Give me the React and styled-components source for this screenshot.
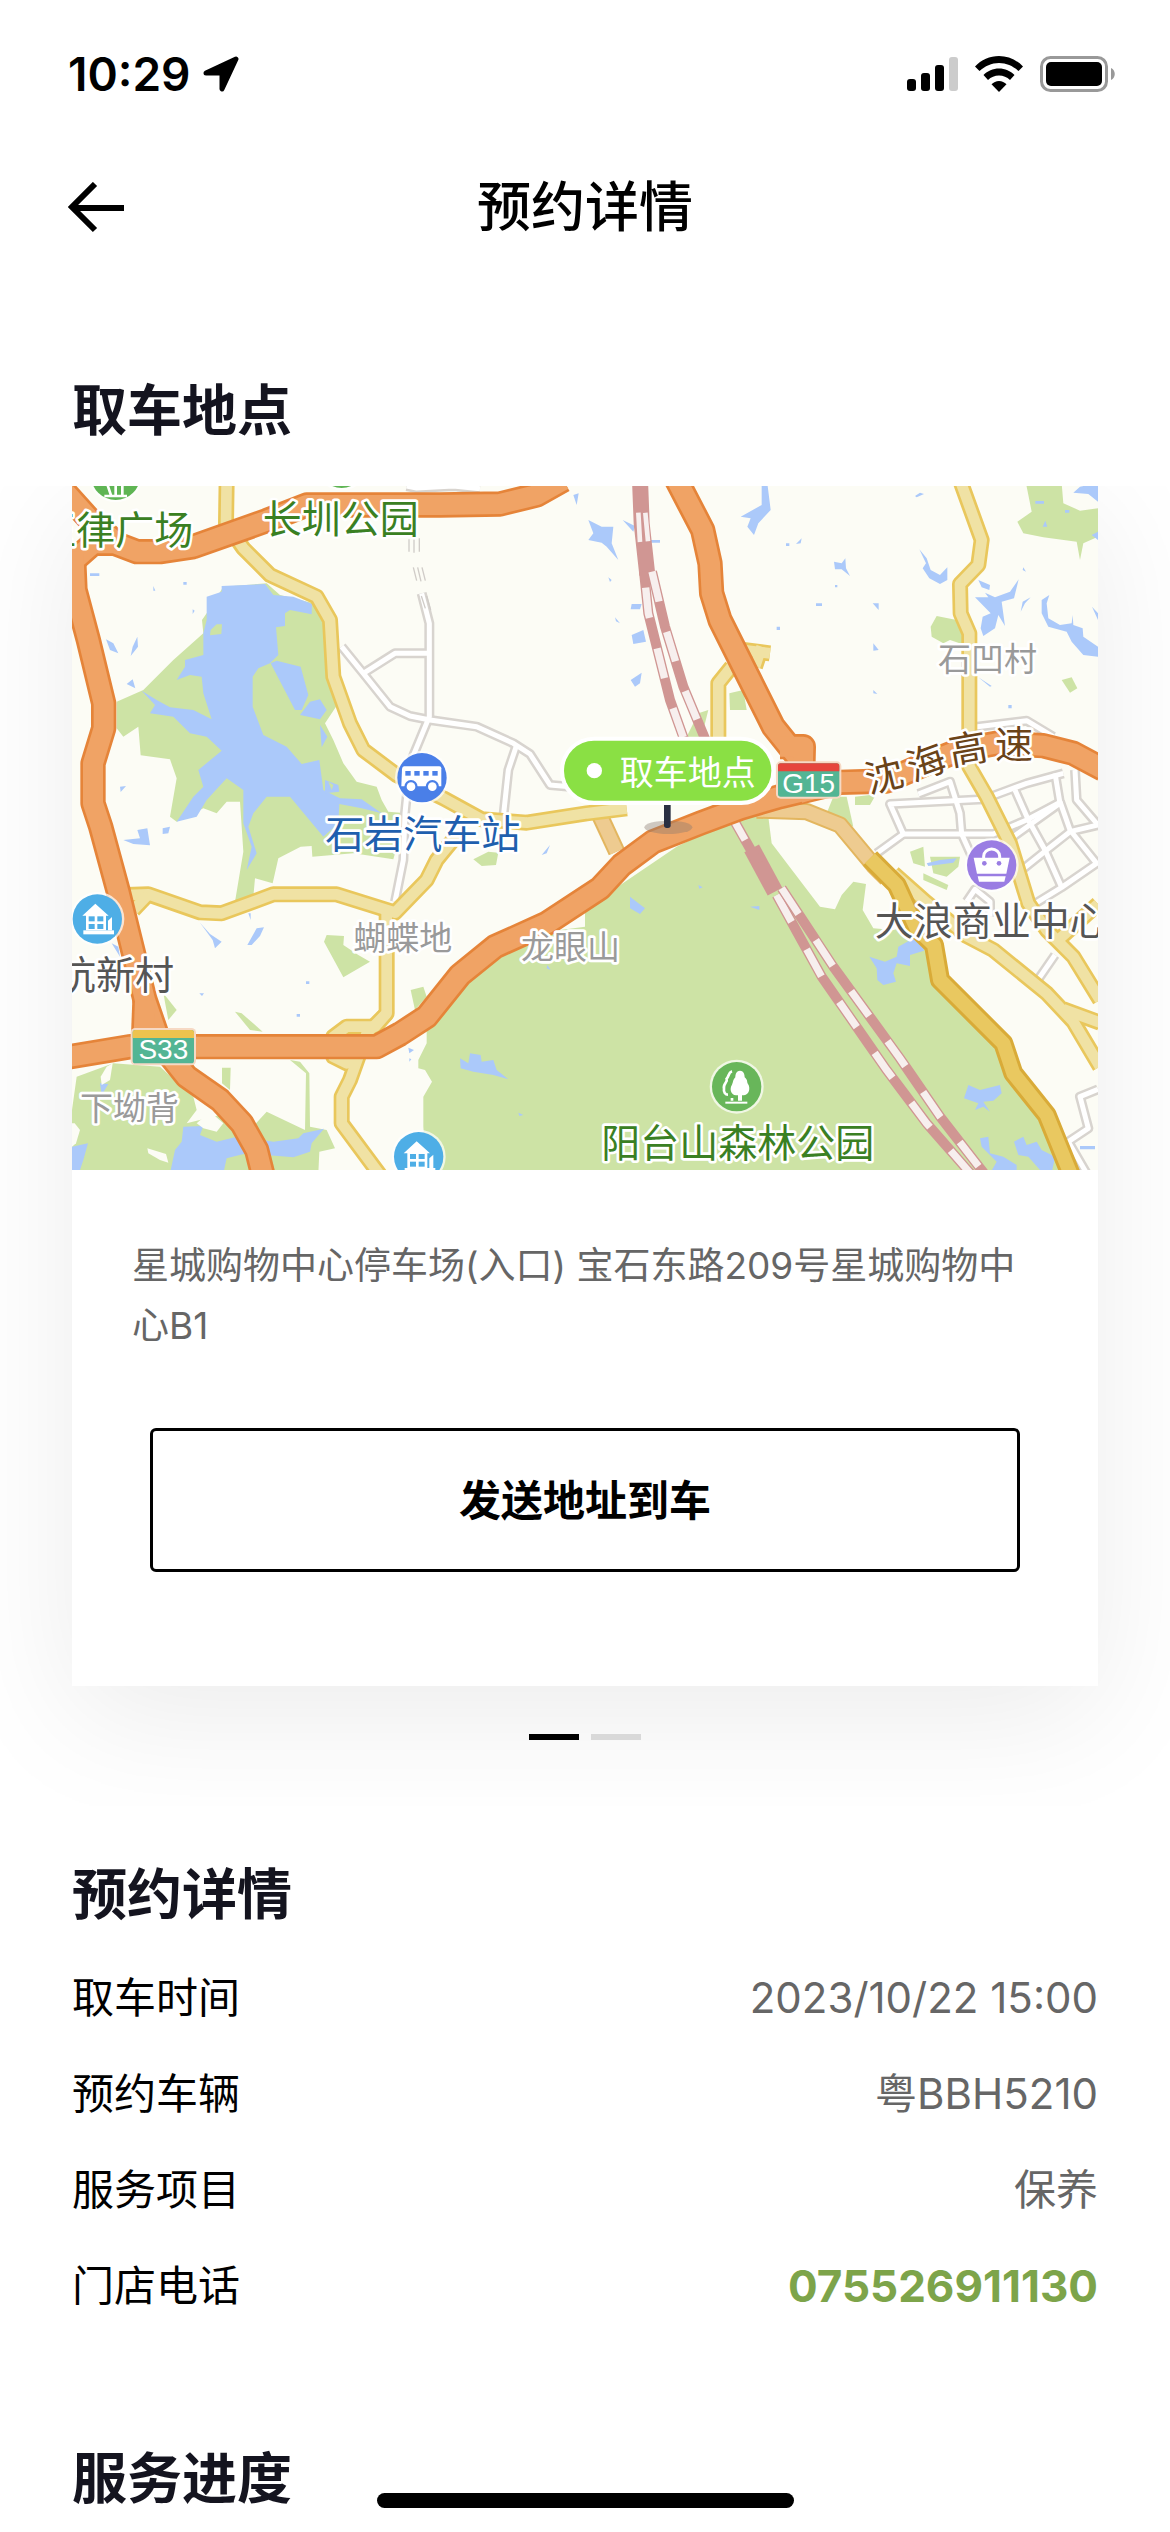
import React from 'react'
import styled, { createGlobalStyle } from 'styled-components'

const GlobalStyle = createGlobalStyle`
  * {
    box-sizing: border-box;
  }
  body {
    margin: 0;
    background: #fff;
    color: #000;
    font-family: Inter, "Noto Sans CJK SC", sans-serif;
  }
  h1, h2, p, dl, dd {
    margin: 0;
  }
`

const Page = styled.div`
  min-height: 100vh;
  overflow: hidden;
`

const StatusBar = styled.div`
  display: flex;
  align-items: center;
  justify-content: space-between;
  height: 148px;
  padding: 0 54px 0 68px;
`

const StatusGroup = styled.div`
  display: flex;
  align-items: center;
  gap: ${props => props.$gap}px;
`

const Clock = styled.span`
  font-size: 46px;
  line-height: 56px;
  font-weight: 600;
`

const NavBar = styled.header`
  display: grid;
  grid-template-columns: 1fr auto 1fr;
  align-items: center;
  height: 120px;
  padding: 0 66px;
`

const BackButton = styled.button`
  display: flex;
  justify-self: start;
  padding: 0;
  border: 0;
  background: none;
  cursor: pointer;
`

const NavTitle = styled.h1`
  font-size: 54px;
  line-height: 80px;
  font-weight: 500;
`

const SectionTitle = styled.h2`
  padding: 0 72px;
  color: #14141f;
  font-size: 55px;
  line-height: 80px;
  font-weight: 700;
`

const PickupSection = styled.section`
  padding-top: 102px;
`

const Carousel = styled.div`
  margin-top: 36px;
  padding: 0 72px 66px;
  overflow: hidden;
`

const Card = styled.article`
  background: #fff;
  box-shadow: 0 30px 120px rgba(0, 0, 0, 0.08);
`

const MapSvg = styled.svg`
  display: block;
  width: 100%;
  height: auto;
`

const MapText = styled.text`
  font-family: "Noto Sans CJK SC", sans-serif;
  font-size: ${props => props.$size || 117}px;
  fill: ${props => props.$color};
  stroke: #fff;
  stroke-width: ${props => (props.$plain ? 0 : 16)}px;
  stroke-linejoin: round;
  paint-order: stroke;
`

const BadgeText = styled(MapText)`
  font-family: "Liberation Sans", Arial, sans-serif;
  text-anchor: middle;
`

const CardBody = styled.div`
  padding: 66px 60px 114px;
`

const Address = styled.p`
  color: #666;
  font-size: 37px;
  line-height: 60px;
`

const SendButton = styled.button`
  display: block;
  width: calc(100% - 36px);
  height: 144px;
  margin: 72px auto 0;
  padding: 0 0 6px;
  border: 3px solid #000;
  border-radius: 6px;
  background: #fff;
  color: #000;
  font-family: inherit;
  font-size: 42px;
  font-weight: 700;
  cursor: pointer;
`

const Pagination = styled.div`
  display: flex;
  justify-content: center;
  gap: 12px;
  margin-top: 48px;
`

const Bullet = styled.span`
  width: 50px;
  height: 6px;
  background: ${props => (props.$active ? '#000' : '#d9d9d9')};
`

const DetailSection = styled.section`
  padding-top: 48px;
`

const DetailList = styled.dl`
  padding: 16px 72px 0;
`

const DetailRow = styled.div`
  display: flex;
  align-items: center;
  justify-content: space-between;
  height: 96px;
  font-size: 42px;
  line-height: 60px;
`

const DetailValue = styled.dd`
  color: #666;
`

const PhoneLink = styled.a`
  color: #7da44a;
  font-size: 44px;
  font-weight: 700;
  text-decoration: none;
`

const ProgressSection = styled.section`
  padding-top: 104px;
`

const HomeIndicator = styled.div`
  position: fixed;
  bottom: 24px;
  left: 50%;
  width: 417px;
  height: 15px;
  margin-left: -208px;
  border-radius: 8px;
  background: #000;
`

const LocationIcon = () => (
  <svg width="36" height="36" viewBox="0 0 36 36" aria-hidden="true">
    <path
      d="M33 3 L19 33 V17 H3 Z"
      stroke="#000"
      strokeWidth="5"
      strokeLinejoin="round"
    />
  </svg>
)

const SignalIcon = () => (
  <svg width="51" height="36" viewBox="0 0 51 36" aria-hidden="true">
    <rect x="0" y="23" width="9" height="12" rx="3" />
    <rect x="14" y="17" width="9" height="18" rx="3" />
    <rect x="28" y="9" width="9" height="26" rx="3" />
    <rect x="42" y="1" width="9" height="34" rx="3" fill="#ccc" />
  </svg>
)

const WifiIcon = () => (
  <svg width="48" height="36" viewBox="0 0 48 36" aria-hidden="true">
    <path d="M24 0 C33 0 42 4 48 10.5 L43.5 15 C38 10 31.500 7 24 7 C16.500 7 10 10 4.500 15 L0 10.500 C6 4 15 0 24 0 Z" />
    <path d="M24 12.500 C30 12.500 35.500 15 39.500 19 L35 24 C32 21.200 28.200 19.500 24 19.500 C19.800 19.500 16 21.200 13 24 L8.500 19 C12.500 15 18 12.500 24 12.500 Z" />
    <path d="M24 25 C27 25 29.500 26.300 31.500 28.300 L24 36 L16.500 28.300 C18.500 26.300 21 25 24 25 Z" />
  </svg>
)

const BatteryIcon = () => (
  <svg width="76" height="36" viewBox="0 0 76 36" aria-hidden="true">
    <rect x="1.500" y="1.500" width="65" height="33" rx="9" fill="none" stroke="#999" strokeWidth="3" />
    <rect x="6" y="6" width="56" height="24" rx="5" />
    <path d="M71 12 C76 14 76 22 71 24 Z" fill="#999" />
  </svg>
)

const BackIcon = () => (
  <svg width="60" height="52" viewBox="0 0 60 52" aria-hidden="true">
    <path
      d="M58 26 H7 M29 2 L6 25 L29 48"
      fill="none"
      stroke="#000"
      strokeWidth="6"
    />
  </svg>
)

const streets = [
  '845,500 910,580 990,680 1050,708 1110,720 1250,740 1360,790 1410,822 1470,915 1530,920',
  '910,580 1005,520 1110,520',
  '1085,340 1108,430 1108,710 1050,850 1035,1000 1030,1140 1005,1265',
  '1370,795 1345,870 1330,1010',
  '1040,18 1070,24 1180,18 1260,26',
  '2740,742 2900,722 2980,770',
  '2575,942 2670,905 2700,1000 2705,1062 2740,1140',
  '2450,1120 2530,1062 2490,972 2770,958 2900,910 3010,880',
  '2530,1062 2800,1062 2900,1020 3002,966',
  '2865,930 2905,1020 2955,1110 3005,1222',
  '2860,1070 3000,970 2985,880',
  '3045,870 3050,960 3114,1035',
  '3000,965 3030,1050 3110,1150 3005,1222 2930,1268',
  '2885,1170 2960,1110 3030,1055 3114,1035',
  '2720,1265 2745,1228 2790,1265 2790,1310',
  '2985,1425 2930,1505',
  '3114,1828 3060,1850 3085,1945 3025,1985 3080,2080'
]

const yellowRoads = [
  '500,0 498,130 550,205 630,285 770,350 810,420 820,590 870,730 910,810 1010,885 1150,955 1265,1018 1400,1028 1580,1000 1700,985',
  '200,1245 265,1243 420,1297 485,1300 640,1243 830,1243 1005,1298 1100,1200 1130,1140 1195,1060',
  '265,1243 220,1290',
  '980,1300 980,1600 920,1660 870,1800 845,1850 845,1930 960,2085',
  '980,1600 945,1640 860,1640 820,1670 820,1730 860,1750 910,1700',
  '2015,560 1975,610 1975,800',
  '2050,510 2130,520',
  '2105,500 2085,560',
  '2700,0 2765,180 2755,255 2700,312 2702,400 2728,460 2728,860 2780,950 2850,1090 2905,1270 2960,1350 3040,1430 3120,1560',
  '3114,1272 3000,1375',
  '2500,1180 2600,1268 2720,1368 2800,1410 2960,1540 3040,1625 3120,1760',
  '3010,1588 3120,1628'
]

const highways = [
  '0,20 90,120 165,185',
  '20,260 100,190 165,190 230,215 300,215 400,200 620,122 740,75 1040,75 1140,75 1320,72 1430,45 1510,0',
  '40,215 45,330 85,480 131,670 131,745 99,850 99,970 122,1040 175,1235 255,1560 300,1690 380,1790 480,1860 545,1930 590,2010 610,2090',
  '255,1560 250,1690',
  '20,1732 210,1700 950,1700 1020,1662 1100,1610 1200,1485 1305,1400 1460,1330 1620,1225 1685,1155 1780,1085 1920,1030 2040,985 2160,950 2340,907 2480,903 2600,850 2700,810 2810,790 2950,797 3040,820 3130,868',
  '1850,0 1928,150 1950,250 1955,340 1980,420 2070,600 2140,740 2220,840 2255,960',
  '2160,800 2230,800 2228,880'
]

const trunkRoads = [
  '2430,1135 2510,1215 2570,1345 2622,1395 2640,1500 2830,1690 2860,1780 2960,1905 3035,2090'
]

const tanRoads = [
  '2090,990 2240,995 2340,1035 2440,1155 2480,1195',
  '1612,990 1670,1115'
]

const railTracks = [
  { points: '1752,275 1765,400 1830,660 1880,800', offset: -48 },
  { points: '1776,275 1815,440 1870,620 1945,800', offset: 0 },
  { points: '2010,1000 2095,1150', offset: 0 },
  { points: '2150,1245 2285,1490 2480,1770 2600,1930 2740,2090', offset: 0 },
  { points: '2165,1225 2320,1460 2520,1735 2640,1910 2780,2090', offset: 0 }
]

const parks = [
  'M170 665 L250 630 L340 540 L430 460 L426 420 L440 400 L490 320 L620 310 L660 345 L760 370 L800 450 L810 600 L828 680 L795 730 L820 780 L850 850 L890 905 L950 920 L965 960 L985 995 L1040 1000 L1000 1138 L880 1120 L757 1130 L755 1098 L722 1100 L655 1135 L638 1210 L585 1195 L580 1250 L525 1265 L550 1115 L540 965 L500 965 L470 1000 L430 985 L350 1025 L330 1010 L350 895 L330 838 L242 826 L235 740 L190 770 L170 745 Z',
  'M1100 2080 L1090 1940 L1090 1850 L1116 1805 L1095 1770 L1075 1765 L1075 1740 L1100 1690 L1100 1640 L1240 1480 L1330 1410 L1500 1350 L1575 1340 L1575 1300 L1600 1270 L1850 1100 L2010 1020 L2060 930 L2125 1010 L2135 1090 L2200 1175 L2280 1280 L2325 1288 L2345 1245 L2380 1205 L2418 1212 L2408 1290 L2440 1345 L2500 1350 L2580 1330 L2625 1500 L2830 1700 L2950 1900 L3035 2080 Z',
  'M36 1890 L50 1790 L160 1750 L300 1760 L400 1850 L410 1890 L380 1930 L480 1905 L560 1960 L620 1895 L735 1950 L738 1780 L690 1740 L720 1745 L748 1780 L750 1940 L800 1950 L825 2005 L778 2015 L775 2080 L36 2080 Z',
  'M486 1763 L512 1763 L510 1830 L486 1810 Z',
  'M310 1540 L350 1590 L325 1620 Z',
  'M800 1365 L852 1368 L850 1395 L895 1425 L930 1445 L850 1492 L792 1385 Z',
  'M525 1595 L545 1600 L608 1655 L570 1650 Z',
  'M1240 1138 L1285 1115 L1315 1118 L1308 1155 L1265 1158 Z',
  'M1052 1530 L1090 1520 L1100 1550 L1065 1590 Z',
  'M2898 10 L3005 10 L3010 70 L3060 92 L3114 85 L3114 170 L3070 190 L3060 240 L3050 185 L2950 172 L2890 160 L2872 125 L2915 95 Z',
  'M2612 440 L2630 408 L2690 420 L2730 500 L2670 480 L2650 490 L2615 470 Z',
  'M3005 600 L3035 592 L3052 625 L3030 638 Z',
  'M2008 640 L2050 630 L2060 690 L2010 690 Z',
  'M1880 770 L1915 700 L1945 690 L1920 790 Z',
  'M2320 950 L2360 950 L2380 1040 L2300 1000 Z',
  'M2385 950 L2430 945 L2450 940 L2430 975 L2385 975 Z',
  'M2550 1115 L2590 1100 L2595 1160 L2560 1150 Z M2610 1130 L2700 1130 L2695 1160 L2660 1190 L2620 1180 Z M2590 1180 L2665 1215 L2660 1230 L2590 1200 Z'
]

const lakes = [
  'M440 350 L485 335 L485 318 L615 312 L640 345 L700 350 L756 372 L755 403 L690 390 L675 400 L675 438 L648 442 L655 525 L630 550 L595 565 L578 590 L578 680 L610 765 L680 800 L725 852 L778 840 L790 930 L840 955 L905 958 L965 1000 L905 985 L838 972 L835 1030 L790 1070 L740 1010 L690 950 L620 950 L580 1000 L565 1040 L590 1120 L560 1170 L575 1100 L550 1030 L550 930 L500 895 L440 960 L410 1010 L350 1025 L400 950 L430 920 L415 870 L485 812 L440 770 L390 760 L340 710 L270 700 L285 675 L245 632 L290 660 L330 682 L400 690 L455 718 L430 640 L425 590 L390 585 L350 600 L375 560 L375 540 L430 525 L430 460 L440 420 Z',
  'M632 550 L650 542 L722 560 L745 645 L725 690 L705 690 Z',
  'M720 705 L750 665 L780 658 L800 690 L780 718 Z',
  'M780 735 L802 770 L785 802 Z',
  'M795 900 L835 915 L838 935 L795 940 Z',
  'M90 280 H118 V288 H90 Z M370 306 H380 V314 H370 Z M280 318 L286 332 H280 Z M398 388 L404 392 L398 402 Z',
  'M138 478 L160 490 L175 520 L150 510 Z M232 470 L234 500 L212 528 L218 500 Z M200 612 L218 598 L226 625 Z',
  'M180 920 L198 918 L182 936 Z M190 1080 L240 1075 L232 1050 L262 1045 L270 1096 L220 1092 Z M308 1045 L330 1040 L325 1060 L308 1062 Z',
  'M420 1328 L450 1362 L485 1385 L465 1405 L458 1380 Z M562 1395 L590 1345 L612 1342 L600 1368 L575 1395 Z M565 1300 H572 V1320 Z M155 1390 L175 1400 L180 1430 Z',
  'M418 1540 L432 1540 L426 1548 Z M738 1504 H748 V1512 H738 Z M710 1602 H720 V1610 H710 Z',
  'M120 1810 L145 1812 L125 1845 Z M36 2000 L84 1990 L70 2040 L60 2070 L36 2070 Z',
  'M370 1940 L430 1938 L420 1965 L470 1985 L540 1968 L640 1985 L715 1975 L730 1960 L792 1946 L755 1990 L750 2015 L700 2032 L560 2020 L500 2035 L490 2080 L330 2080 L345 2010 L365 1985 Z',
  'M1585 120 L1625 140 L1660 140 L1655 190 L1675 240 L1640 200 L1625 188 L1585 180 L1600 160 Z',
  'M1540 45 L1556 40 L1550 75 Z M1688 120 L1725 138 L1720 155 Z M1768 180 H1800 V188 H1768 Z M1645 292 L1655 300 L1650 306 Z',
  'M1715 372 L1745 372 L1740 388 L1712 388 Z M1715 465 L1750 450 L1758 485 L1720 492 Z M1665 412 L1680 430 L1668 424 Z M1712 600 L1745 578 L1740 610 L1725 620 Z',
  'M2105 10 L2122 10 L2132 90 L2095 130 L2082 165 L2062 140 L2072 115 L2042 110 L2105 75 Z',
  'M2565 48 L2580 38 L2592 42 L2570 52 Z M2208 192 L2225 175 L2222 190 Z M2178 190 H2188 V198 H2178 Z',
  'M2322 245 L2345 250 L2356 235 L2358 265 L2370 288 L2345 268 L2325 268 Z M2325 315 H2332 V322 H2325 Z M2268 370 H2286 V378 H2268 Z M2438 370 L2456 370 L2456 390 Z M2150 440 H2160 V450 H2150 Z M2440 490 L2456 510 L2440 512 Z M2440 630 L2452 642 L2440 640 Z',
  'M2578 208 L2600 235 L2612 270 L2640 285 L2662 262 L2662 300 L2640 312 L2608 295 L2588 265 L2598 250 Z',
  'M2755 300 L2790 315 L2788 330 L2765 322 Z M2745 352 L2785 352 L2775 338 L2805 352 L2850 335 L2876 298 L2862 355 L2825 365 L2835 438 L2815 405 L2805 445 L2770 468 L2762 445 L2768 410 L2792 400 Z',
  'M2890 262 L2898 275 L2888 270 Z M2882 395 L2888 365 L2912 352 L2895 370 Z',
  'M2945 360 L2968 345 L2960 370 L2965 415 L3000 435 L3035 430 L3038 405 L3040 435 L3068 445 L3070 470 L3114 500 L3114 530 L3070 525 L3035 485 L3020 455 L2965 440 L2945 400 Z',
  'M3040 38 L3060 20 L3114 10 L3114 65 L3085 42 Z M3095 165 L3114 155 L3114 180 Z M3096 380 L3114 400 L3114 420 Z M2926 63 H2952 V71 H2926 Z M2948 140 L2956 122 L2962 140 Z M3015 90 H3028 V98 H3015 Z',
  'M2755 592 L2795 618 L2790 620 Z M2828 655 L2832 668 Z M2845 675 H2855 V685 H2845 Z',
  'M1710 1250 L1755 1285 L1740 1302 L1710 1285 Z M1915 1215 L1928 1222 L1918 1226 Z M2070 1280 L2098 1278 L2098 1290 Z M1445 1125 L1470 1095 L1460 1120 Z',
  'M1200 1735 L1225 1750 L1230 1720 L1262 1725 L1265 1745 L1300 1740 L1310 1770 L1345 1798 L1300 1785 L1240 1775 L1202 1765 Z',
  'M1045 1703 L1062 1710 L1048 1720 Z M1048 1735 L1054 1738 L1048 1745 Z M1450 1962 L1468 1980 Z M1375 1898 L1390 1905 L1378 1908 Z M1462 1455 L1472 1470 L1460 1465 Z',
  'M2428 1430 L2475 1445 L2510 1430 L2515 1400 L2555 1378 L2580 1375 L2592 1412 L2550 1425 L2550 1458 L2510 1450 L2500 1480 L2508 1505 L2470 1515 L2452 1500 L2450 1465 Z',
  'M2712 1855 L2725 1815 L2760 1830 L2820 1815 L2825 1840 L2800 1862 L2770 1865 L2790 1895 L2770 1880 L2745 1890 L2755 1870 Z',
  'M2760 1975 L2785 1970 L2790 2020 L2830 2030 L2870 2055 L2870 2080 L2790 2080 L2810 2045 L2765 2000 Z',
  'M2862 1985 L2890 1970 L2900 1995 L2930 1985 L2945 2010 L2985 2030 L2975 2080 L2940 2070 L2905 2030 L2875 2025 Z M3060 1998 H3105 V2008 H3060 Z',
  'M2600 1150 L2640 1140 L2690 1135 L2680 1148 L2605 1158 Z'
]

const labels = [
  { text: '玉律广场', x: -68, y: 192, color: '#3a8023' },
  { text: '长圳公园', x: 608, y: 158, color: '#3a8023' },
  { text: '石岩汽车站', x: 796, y: 1103, color: '#1f5fae' },
  { text: '坑新村', x: -9, y: 1526, color: '#555' },
  { text: '大浪商业中心', x: 2444, y: 1364, color: '#555' },
  { text: '阳台山森林公园', x: 1624, y: 2030, color: '#3a8023' },
  { text: '石凹村', x: 2634, y: 574, color: '#9a9a9a', size: 99 },
  { text: '蝴蝶地', x: 880, y: 1411, color: '#9a9a9a', size: 99 },
  { text: '龙眼山', x: 1383, y: 1437, color: '#9a9a9a', size: 99 },
  { text: '下坳背', x: 60, y: 1921, color: '#9a9a9a', size: 99 }
]

// the expressway name bends along the road, one character at a time
const expressway = [
  { text: '沈', x: 2472, y: 885, angle: -14 },
  { text: '海', x: 2598, y: 845, angle: -20 },
  { text: '高', x: 2724, y: 806, angle: -10 },
  { text: '速', x: 2862, y: 792, angle: 0 }
]

const Road = ({ points, edge, fill, width, inner }) => (
  <g fill="none" strokeLinejoin="round">
    {points.map(p => (
      <polyline key={p} points={p} stroke={edge} strokeWidth={width} />
    ))}
    {points.map(p => (
      <polyline key={p} points={p} stroke={fill} strokeWidth={inner} />
    ))}
  </g>
)

const Poi = ({ x, y, color, children }) => (
  <g transform={`translate(${x} ${y})`}>
    <circle r="81" fill="#fff" opacity="0.7" />
    <circle r="74" fill={color} />
    {children}
  </g>
)

const House = () => (
  <g fill="#fff">
    <path d="M-45 -10 L-6 -46 L34 -10 H26 V34 H-34 V-10 Z" />
    <path d="M32 5 L44 -6 V34 H32 Z" />
    <rect x="-42" y="34" width="92" height="12" />
    <g fill="#4eaee6">
      <rect x="-26" y="-8" width="18" height="15" />
      <rect x="0" y="-8" width="18" height="15" />
      <rect x="-26" y="15" width="18" height="15" />
      <rect x="0" y="15" width="18" height="15" />
    </g>
  </g>
)

const Bus = () => (
  <g fill="#fff">
    <path d="M-54 -34 H52 Q58 -34 58 -28 V26 H-62 L-60 -26 Q-59 -34 -54 -34 Z" />
    <g fill="#4a7fe8">
      <rect x="-50" y="-20" width="16" height="14" />
      <rect x="-23" y="-20" width="16" height="14" />
      <rect x="4" y="-20" width="16" height="14" />
      <rect x="31" y="-20" width="16" height="14" />
      <circle cx="-33" cy="27" r="20" />
      <circle cx="31" cy="27" r="20" />
    </g>
    <circle cx="-33" cy="27" r="13" />
    <circle cx="31" cy="27" r="13" />
  </g>
)

const Trees = () => (
  <g>
    <path
      d="M10 -48 C20 -48 24 -38 24 -28 C34 -20 30 -14 34 -8 C42 4 38 24 22 26 H16 V42 H4 V26 H-2 C-18 24 -22 6 -14 -6 C-10 -14 -12 -20 -4 -28 C-4 -38 0 -48 10 -48 Z"
      fill="#fff"
    />
    <path
      d="M-14 -46 C-26 -42 -22 -32 -30 -24 C-26 -14 -42 -8 -38 6 C-40 16 -34 24 -26 24 M-14 34 V42"
      fill="none"
      stroke="#fff"
      strokeWidth="8"
    />
    <path d="M-34 48 H32" stroke="#fff" strokeWidth="6" />
  </g>
)

const Bag = () => (
  <g>
    <path d="M-24 -16 V-26 A24 22 0 0 1 24 -26 V-16" fill="none" stroke="#fff" strokeWidth="9" />
    <path d="M-54 -22 H54 L44 26 H-44 Z" fill="#fff" />
    <path d="M-42 34 H42 L38 50 H-38 Z" fill="#fff" />
    <circle cx="-22" cy="-5" r="7" fill="#9a7de3" />
    <circle cx="22" cy="-5" r="7" fill="#9a7de3" />
  </g>
)

const RouteBadge = ({ x, y, band, children }) => (
  <g transform={`translate(${x} ${y})`}>
    <rect x="-6" y="-6" width="196" height="112" rx="14" fill="#f6d9c4" />
    <rect width="184" height="100" rx="8" fill="#53b594" />
    <path d="M0 24 V8 Q0 0 8 0 H176 Q184 0 184 8 V24 Z" fill={band} />
    <BadgeText x="92" y="88" $size={84} $color="#fff" $plain>{children}</BadgeText>
  </g>
)

const PickupMap = () => (
  <MapSvg viewBox="36 18 3078 2052" role="img" aria-label="取车地点">
    <rect x="36" y="18" width="3078" height="2052" fill="#fcfcf5" />
    <g fill="#cde3a5">
      {parks.map(d => <path key={d} d={d} />)}
    </g>
    <g fill="#abc9fa">
      {lakes.map(d => <path key={d} d={d} />)}
    </g>
    <g fill="#cde3a5">
      <path d="M452 450 L470 433 L486 433 L484 462 L450 466 Z" />
      <path d="M805 905 L820 915 L815 930 Z" />
    </g>
    <g fill="#fcfcf5">
      <path d="M140 1760 L158 1750 L150 1800 L125 1815 L122 1790 Z" />
      <path d="M262 2005 L318 2022 L325 2048 L300 2040 L265 2020 Z" />
      <path d="M410 1930 L450 1895 L490 1930 L470 1955 L430 1945 Z" />
      <path d="M44 1930 L60 1950 L48 1990 L36 2000 V1930 Z" />
    </g>
    <Road points={streets} edge="#d8d4cf" fill="#fff" width={30} inner={15} />
    <path
      d="M1047 178 V215 M1062 175 V218 M1078 175 V215 M1060 262 L1070 302 M1073 262 L1083 304 M1086 262 L1096 302 M1084 348 L1096 385 M1100 348 L1112 390"
      stroke="#d0ccc8"
      strokeWidth="4"
    />
    <Road points={tanRoads} edge="#e3b65f" fill="#eecb90" width={52} inner={40} />
    <Road points={yellowRoads} edge="#e9c75c" fill="#f0e2a4" width={48} inner={32} />
    <Road points={trunkRoads} edge="#d9ab38" fill="#e9c860" width={60} inner={42} />
    <g fill="none">
      <polyline points="1740,0 1745,130 1762,285" stroke="#d09693" strokeWidth="48" />
      <path d="M1735 98 L1740 186 M1756 98 L1764 184" stroke="#f7efee" strokeWidth="14" />
      <polyline points="2075,1105 2145,1235" stroke="#d09693" strokeWidth="50" />
      {railTracks.map(t => (
        <g key={t.points}>
          <polyline points={t.points} stroke="#d09693" strokeWidth="30" />
          <polyline
            points={t.points}
            stroke="#f7efee"
            strokeWidth="22"
            strokeDasharray="92 94"
            strokeDashoffset={t.offset}
          />
        </g>
      ))}
    </g>
    <Road points={highways} edge="#e58439" fill="#f0a365" width={76} inner={60} />

    <Poi x={167} y={-14} color="#5fb554">
      <path d="M-24 30 L-14 60 M0 20 V60 M20 30 V60 M-34 62 H34" stroke="#fff" strokeWidth="8" />
    </Poi>
    <Poi x={845} y={-50} color="#5fb554" />
    <Poi x={1086} y={893} color="#4a7fe8"><Bus /></Poi>
    <Poi x={112} y={1317} color="#4eaee6"><House /></Poi>
    <Poi x={1076} y={2030} color="#4eaee6"><House /></Poi>
    <Poi x={2030} y={1820} color="#68b65a"><Trees /></Poi>
    <Poi x={2795} y={1155} color="#9a7de3"><Bag /></Poi>

    {labels.map(l => (
      <MapText key={l.text} x={l.x} y={l.y} $size={l.size} $color={l.color}>{l.text}</MapText>
    ))}
    {expressway.map(c => (
      <g key={c.text} transform={`translate(${c.x} ${c.y}) rotate(${c.angle})`}>
        <MapText x="-57" y="43" $size={114} $color="#6b4318">{c.text}</MapText>
      </g>
    ))}
    <RouteBadge x={218} y={1650} band="#edc34e">S33</RouteBadge>
    <RouteBadge x={2154} y={850} band="#e6453c">G15</RouteBadge>

    <ellipse cx="1825" cy="1042" rx="72" ry="20" fill="#8a7a70" opacity="0.4" />
    <rect x="1812" y="960" width="20" height="84" rx="8" fill="#2a3042" />
    <rect x="1500" y="770" width="646" height="205" rx="102" fill="#fff" />
    <rect x="1512" y="782" width="622" height="180" rx="90" fill="#8ae044" />
    <circle cx="1603" cy="872" r="23" fill="#fff" />
    <MapText x="1679" y="914" $size={102} $color="#fff" $plain>取车地点</MapText>
  </MapSvg>
)

const details = [
  { label: '取车时间', value: '2023/10/22 15:00' },
  { label: '预约车辆', value: '粤BBH5210' },
  { label: '服务项目', value: '保养' },
  { label: '门店电话', value: <PhoneLink href="tel:075526911130">075526911130</PhoneLink> }
]

const App = () => (
  <Page>
    <GlobalStyle />
    <StatusBar>
      <StatusGroup $gap={12}>
        <Clock>10:29</Clock>
        <LocationIcon />
      </StatusGroup>
      <StatusGroup $gap={17}>
        <SignalIcon />
        <WifiIcon />
        <BatteryIcon />
      </StatusGroup>
    </StatusBar>

    <NavBar>
      <BackButton type="button" aria-label="返回">
        <BackIcon />
      </BackButton>
      <NavTitle>预约详情</NavTitle>
    </NavBar>

    <main>
      <PickupSection>
        <SectionTitle>取车地点</SectionTitle>
        <Carousel>
          <Card>
            <PickupMap />
            <CardBody>
              <Address>星城购物中心停车场(入口) 宝石东路209号星城购物中心B1</Address>
              <SendButton type="button">发送地址到车</SendButton>
            </CardBody>
          </Card>
          <Pagination>
            <Bullet $active />
            <Bullet />
          </Pagination>
        </Carousel>
      </PickupSection>

      <DetailSection>
        <SectionTitle>预约详情</SectionTitle>
        <DetailList>
          {details.map(item => (
            <DetailRow key={item.label}>
              <dt>{item.label}</dt>
              <DetailValue>{item.value}</DetailValue>
            </DetailRow>
          ))}
        </DetailList>
      </DetailSection>

      <ProgressSection>
        <SectionTitle>服务进度</SectionTitle>
      </ProgressSection>
    </main>

    <HomeIndicator />
  </Page>
)

export default App
